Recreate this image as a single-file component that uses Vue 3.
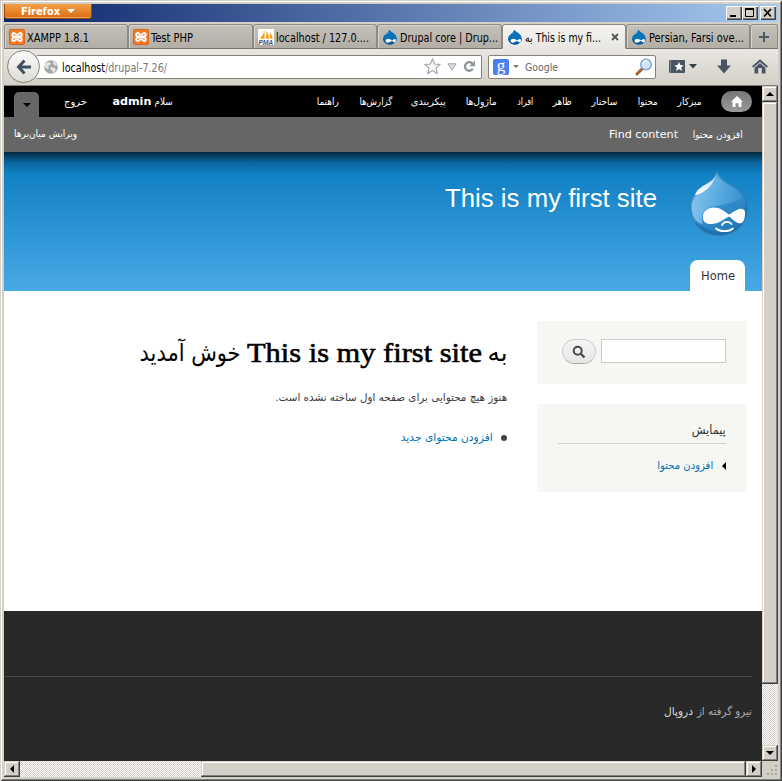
<script setup>
// Scales a run of text horizontally so that it occupies the given width.
const vFit = {
  mounted(el, { value }) {
    if (!value) return
    const natural = el.getBoundingClientRect().width
    const rtl = getComputedStyle(el).direction === 'rtl'
    el.style.transformOrigin = rtl ? 'right center' : 'left center'
    el.style.transform = `scaleX(${value / natural})`
    el.style.marginInlineEnd = `${value - natural}px`
  },
}

const tabs = [
  { icon: 'xampp', text: 'XAMPP 1.8.1', w: 62 },
  { icon: 'xampp', text: 'Test PHP', w: 42 },
  { icon: 'pma', text: 'localhost / 127.0....', w: 93 },
  { icon: 'drop', text: 'Drupal core | Drup...', w: 98 },
  { icon: 'drop', text: 'به \u200eThis is my fi...', w: 76, active: true },
  { icon: 'drop', text: 'Persian, Farsi ove...', w: 95 },
]

const menu = [
  { text: 'میزکار', w: 24, gap: 20 },
  { text: 'محتوا', w: 20, gap: 20 },
  { text: 'ساختار', w: 26, gap: 20 },
  { text: 'ظاهر', w: 19, gap: 20 },
  { text: 'افراد', w: 16, gap: 20 },
  { text: 'ماژول‌ها', w: 31, gap: 20 },
  { text: 'پیکربندی', w: 35, gap: 19 },
  { text: 'گزارش‌ها', w: 33, gap: 20 },
  { text: 'راهنما', w: 22, gap: 0 },
]
</script>

<template>
  <div class="window">
    <svg class="defs" width="0" height="0">
      <symbol id="drop" viewBox="0 0 16 16">
        <path d="M7.200.4C8 2.800 14.800 4.300 14.800 9.600c0 3.500-2.900 6-6.800 6s-6.900-2.500-6.900-6C1.100 5.200 6.500 4.400 7.200.4z" fill="#0872b9" />
        <path d="M3 5.500C4.400 4.400 6.300 3.600 7 2.200 7.100 4 5 5.200 3 5.500z" fill="#6db9e8" />
        <path d="M1.200 9.500c.3 4 3.400 6.100 6.800 6.100 3.900 0 6.600-2.600 6.800-5.800-2 2.300-10 4-13.600-.3z" fill="#075a99" />
        <path d="M10 11.600C8.600 10.600 7.600 9.800 6.200 9.800 4.600 9.800 3.600 10.800 3.600 12s1 1.700 2 1.700c1.700 0 2.800-1.300 4.400-1.800 1.300.5 2 1.700 3 1.500.9-.3 1.200-2.400.7-3-1-.9-2.500.6-3.700 1.200z" fill="#fff" />
      </symbol>
      <symbol id="xampp" viewBox="0 0 16 16">
        <rect x=".5" y=".5" width="15" height="15" rx="1.500" fill="#f37b28" stroke="#d9651b" />
        <path d="M5.800 4H5a1.600 1.600 0 0 0-.3 3.300L6 8l-1.300.7A1.600 1.600 0 0 0 5 12h.8M10.200 4h.8a1.600 1.600 0 0 1 .3 3.300L10 8l1.300.7A1.600 1.600 0 0 1 11 12h-.8M6 8h4M6 4.300l1 1.500h2l1-1.500M6 11.700l1-1.500h2l1 1.500" fill="none" stroke="#fff" stroke-width="1.900" />
      </symbol>
    </svg>

    <header class="titlebar">
      <button class="firefox"><span v-fit="39">Firefox</span><i class="tri light"></i></button>
      <div class="controls">
        <button><svg width="14" height="12"><path d="M3 9h6" stroke="#000" stroke-width="2" /></svg></button>
        <button><svg width="14" height="12"><path d="M2.500 2.500h8v7h-8zM2 2.500h9" fill="none" stroke="#000" /><path d="M2 2h9" stroke="#000" stroke-width="2" /></svg></button>
        <button class="close"><svg width="14" height="12"><path d="M3 2l7 7.500M10 2L3 9.500" stroke="#000" stroke-width="1.700" /></svg></button>
      </div>
    </header>

    <nav class="tabs">
      <div v-for="t in tabs" :key="t.text" class="tab" :class="{ active: t.active }">
        <svg v-if="t.icon === 'pma'" class="fav" width="16" height="16">
          <rect width="16" height="16" fill="#fff" />
          <path d="M6.500.5v9.300H1.500C4.500 7.500 6 4 6.500.5zM8 2c2 2 3 5 3 7.800H7.500C8.500 7.500 8.500 5 8 2zM11.500 3.500c2 1.500 3 4 3.200 6.300h-3c.5-2.300.4-4.300-.2-6.300z" fill="#f9a11b" />
          <text x=".2" y="15.500" textLength="15" lengthAdjust="spacingAndGlyphs" font-size="6.500" font-weight="bold" font-style="italic" font-family="Liberation Sans, sans-serif" fill="#4c4f82">PMA</text>
        </svg>
        <svg v-else class="fav" width="16" height="16"><use :href="'#' + t.icon" /></svg>
        <span v-fit="t.w" class="label" dir="ltr">{{ t.text }}</span>
        <svg v-if="t.active" class="x" width="8" height="8"><path d="M1 1l6 6M7 1L1 7" stroke="#555" stroke-width="1.800" /></svg>
      </div>
      <div class="tab plus"><svg width="12" height="12"><path d="M6 1v10M1 6h10" stroke="#4d5866" stroke-width="2" /></svg></div>
    </nav>

    <div class="navbar">
      <div class="back"><svg width="16" height="16"><path d="M8.500 1.500L2.500 8l6 6.500M3 8h12" fill="none" stroke="#43505f" stroke-width="3" /></svg></div>
      <div class="url">
        <svg width="14" height="14" viewBox="0 0 14 14"><circle cx="7" cy="7" r="6.800" fill="#a5a5a5" /><path d="M1 4l3-2 3 1-1 2-2 1 1 2-2 1-2-2zM9 1l3 2 1 3-3-1-1-2zM7 7l4 1 1 2-3 3-1-3-2-1z" fill="#e4e4e4" /></svg>
        <span v-fit="105" class="address">localhost<em>/drupal-7.26/</em></span>
        <svg class="star" width="17" height="17" viewBox="0 0 17 17"><path d="M8.500 1l2.200 5 5.300.5-4 3.600 1.200 5.400-4.700-2.900-4.700 2.900L5 10.100 1 6.500 6.300 6z" fill="#f4f4f4" stroke="#a0a4a8" stroke-width="1.100" /></svg>
        <svg class="drop" width="10" height="8"><path d="M.8.800h8.400L5 7z" fill="#d9dee4" stroke="#9ba4ae" /></svg>
        <svg class="reload" width="13" height="13" viewBox="0 0 13 13"><path d="M9.800 8.900A4.300 4.300 0 1 1 9.200 3.300" fill="none" stroke="#8d949c" stroke-width="2.300" /><path d="M12 .5v5.800H6.300z" fill="#8d949c" /></svg>
      </div>
      <div class="search">
        <span class="g">g</span><i class="tri small"></i><span v-fit="33" class="ph">Google</span>
        <svg width="18" height="18" viewBox="0 0 18 18"><path d="M8 10L2 16" stroke="#ad5f33" stroke-width="3" stroke-linecap="round" /><circle cx="11" cy="6.500" r="5.300" fill="#cde6fb" stroke="#7b9fc7" stroke-width="1.300" /><path d="M8 6a3.500 3.500 0 0 1 4-3" stroke="#fff" stroke-width="1.500" fill="none" /></svg>
      </div>
      <svg class="bm" width="28" height="16"><rect y="1" width="16" height="13" rx="1" fill="#485562" /><path d="M1.500 1v13" stroke="#7b858f" /><path d="M10 3l1.400 3.100 3.300.3-2.500 2.200.8 3.300-3-1.800-2.900 1.800.8-3.300-2.500-2.200 3.200-.3z" fill="#fff" /><path d="M20 5h8l-4 4.500z" fill="#34404c" /></svg>
      <svg class="dl" width="14" height="15"><path d="M4 .5h6v6h4l-7 8-7-8h4z" fill="#485562" /></svg>
      <svg class="home" width="16" height="15"><path d="M.7 8L8 1.500 15.300 8" fill="none" stroke="#485562" stroke-width="2" /><path d="M2.500 9L8 4l5.500 5v5.500H9.800V9H6.200v5.500H2.500z" fill="#485562" /></svg>
    </div>

    <div class="viewport">
      <main class="page" dir="rtl">
        <div class="admin">
          <span class="adminhome"><svg width="12" height="11"><path d="M6 0l6 5.800h-1.500V11H7.500V7.300h-3V11h-3V5.800H0z" fill="#fff" /></svg></span>
          <a v-for="m in menu" :key="m.text" class="item" :style="{ width: m.w + 'px', marginLeft: m.gap + 'px' }"><span v-fit="m.w">{{ m.text }}</span></a>
          <span class="hello"><span v-fit="18">سلام</span><b v-fit="39">admin</b></span>
          <span class="logout"><span v-fit="23">خروج</span></span>
          <span class="toggle"><i class="tri dark"></i></span>
        </div>
        <div class="shortcuts">
          <span v-fit="50">افزودن محتوا</span>
          <span v-fit="69" class="find" dir="ltr">Find content</span>
          <span class="edit"><span v-fit="63">ویرایش میان‌برها</span></span>
        </div>
        <div class="banner">
          <div class="brand">
            <svg width="58" height="66" viewBox="0 0 58 66">
              <defs>
                <linearGradient id="body" x1="0" y1="0" x2=".6" y2="1"><stop offset="0" stop-color="#69b7e9" /><stop offset=".45" stop-color="#3d97d4" /><stop offset="1" stop-color="#2078b8" /></linearGradient>
                <linearGradient id="shine" x1=".8" y1="0" x2=".2" y2="1"><stop offset="0" stop-color="#fff" stop-opacity=".6" /><stop offset="1" stop-color="#fff" /></linearGradient>
                <linearGradient id="glow" x1="0" y1=".5" x2="1" y2=".3"><stop offset="0" stop-color="#a9dcf8" stop-opacity=".6" /><stop offset="1" stop-color="#8accf2" stop-opacity=".1" /></linearGradient>
                <clipPath id="shape"><path d="M27 0C28 6 34 10 41 14 52 20 57.500 27 57.500 37 57.500 53 45 64.500 29 64.500S.5 53 .5 36C.5 26 6 20 14 14 21 10 25 7 27 0z" /></clipPath>
              </defs>
              <g clip-path="url(#shape)">
                <path d="M0 0h58v66H0z" fill="url(#body)" />
                <path d="M49 18c9 10 9 24 2 34C43 63 28 64 14 56c-5-2-10-5-14-9v19h58V18z" fill="#1767a5" opacity=".6" />
                <path d="M1.500 36C2 46 6 52 13 53c-3-7 0-15 8-17 14-3 28-5 31-10C48 17 32 14 27 5 20 17 3 20 1.500 36z" fill="url(#glow)" />
              </g>
              <path d="M27 0C28 6 34 10 41 14 52 20 57.500 27 57.500 37 57.500 53 45 64.500 29 64.500S.5 53 .5 36C.5 26 6 20 14 14 21 10 25 7 27 0z" fill="none" stroke="#3a7fb0" stroke-width=".8" />
              <path d="M26 3C25 13 14 23 5 24 7 18 13 15 18 12 23 9 25 7 26 3z" fill="url(#shine)" />
              <path d="M39 43.500C34 40 30 36.500 24 36.500 17 36.500 12.800 41 12.800 46c0 4.500 3 7 8 7 8 0 12-4.500 18.200-7.500 4 3 8 7.500 12 6.800 3-1 4.200-6 4-11-.2-3-3-4.200-6.500-3-4 1.300-6.500 3.700-9.500 5.200z" fill="#fff" />
              <path d="M32 54c2-4 7-4 9.500-1M26 57.500c4 3.500 13 3.500 17 0" fill="none" stroke="#fff" stroke-width="1.700" stroke-linecap="round" />
            </svg>
            <h2><span v-fit="212" dir="ltr">This is my first site</span></h2>
          </div>
          <a class="hometab"><span v-fit="34">Home</span></a>
        </div>
        <div class="body">
          <aside>
            <section class="block finder">
              <input type="text" />
              <button><svg width="14" height="14"><circle cx="5.700" cy="5.700" r="4" fill="none" stroke="#4a4a4a" stroke-width="2" /><path d="M8.500 8.500l4 4" stroke="#4a4a4a" stroke-width="2.400" /></svg></button>
            </section>
            <section class="block menu">
              <h3><span v-fit="34">پیمایش</span></h3>
              <p><svg width="4" height="8"><path d="M4 0v8L0 4z" /></svg><a v-fit="56">افزودن محتوا</a></p>
            </section>
          </aside>
          <article>
            <h1><span v-fit="20">به</span><b v-fit="235" dir="ltr">This is my first site</b><span v-fit="101">خوش آمدید</span></h1>
            <p class="lead"><span v-fit="232">هنوز هیچ محتوایی برای صفحه اول ساخته نشده است.</span></p>
            <p class="add"><i></i><a v-fit="92">افزودن محتوای جدید</a></p>
          </article>
        </div>
        <footer><div><span v-fit="55">نیرو گرفته از</span><b v-fit="29">دروپال</b></div></footer>
      </main>
      <div class="vbar"><button><i class="arr up"></i></button><div class="thumb"></div><button><i class="arr down"></i></button></div>
      <div class="hbar"><button><i class="arr left"></i></button><div class="thumb"></div><button><i class="arr right"></i></button></div>
      <div class="grip"><svg width="16" height="16"><g fill="#aaa69d"><path d="M13 4h2v2h-2zM13 8h2v2h-2zM9 8h2v2H9zM13 12h2v2h-2zM9 12h2v2H9zM5 12h2v2H5z" /></g></svg></div>
    </div>
  </div>
</template>

<style>
body { overflow: hidden; }
</style>

<style scoped>
* { box-sizing: border-box; }
.window { width: 782px; height: 781px; padding: 4px 4px 4px; background: #d4d0c8; font: 11px/14px "DejaVu Sans", sans-serif; color: #000; box-shadow: inset 1px 1px #d4d0c8, inset -1px -1px #404040, inset 2px 2px #fff, inset -2px -2px #808080; overflow: hidden; }
.defs { position: absolute; }
span, b, a { white-space: nowrap; }
[dir="ltr"] { direction: ltr; }
button { margin: 0; padding: 0; border: 0; font: inherit; }
h1, h2, h3, p { margin: 0; font-weight: normal; }
.tri { width: 0; height: 0; border: 4px solid transparent; border-bottom: 0; border-top: 4px solid #444; }

.titlebar { height: 18px; display: flex; justify-content: space-between; background: linear-gradient(90deg, #0a246a, #a6caf0); }
.firefox { width: 88px; height: 15px; display: flex; align-items: center; padding-left: 16px; gap: 7px; border: 1px solid #9b4d07; border-top: 0; border-radius: 0 0 3px 3px; background: linear-gradient(#f2a145, #db6c13); color: #fff; font: bold 11px/14px "DejaVu Sans", sans-serif; box-shadow: inset 0 -1px #eea65c; }
.firefox span { position: relative; top: 1px; }
.tri.light { border-top-color: #fff; }
.controls { display: flex; padding: 2px 2px 0 0; }
.controls button { width: 16px; height: 14px; padding: 1px; background: #d4d0c8; box-shadow: inset 1px 1px #fff, inset -1px -1px #404040, inset -2px -2px #808080; display: flex; }
.controls .close { margin-left: 2px; }

.tabs { height: 27px; padding-top: 2px; display: grid; grid-template-columns: 124px 125px 124px 125px 124px 124px 28px; }
.tab { display: flex; align-items: center; gap: 2px; padding: 1px 0 0 4px; height: 25px; border: 1px solid #8e8a83; border-bottom-color: #77736d; border-radius: 3px 3px 0 0; background: linear-gradient(#c4c1ba, #b2aea6); box-shadow: inset 1px 1px #d7d4cd; font: 12px/16px "DejaVu Sans Condensed", "DejaVu Sans", sans-serif; }
.label { padding-top: 1px; }
.tab.active { background: linear-gradient(#f5f4f1, #e9e7e2); border-bottom-color: #e9e7e2; box-shadow: none; }
.tab.plus { padding: 0; justify-content: center; }
.fav { flex: none; }
.x { margin: 0 6px 0 auto; }

.navbar { height: 37px; display: flex; align-items: center; padding: 0 10px 1px 3px; background: linear-gradient(#e9e7e2, #d4d0c8); border-bottom: 1px solid #7f7c76; font: 11px/16px "DejaVu Sans Condensed", "DejaVu Sans", sans-serif; }
.back { width: 33px; height: 33px; flex: none; border: 1px solid #85827c; border-radius: 50%; background: linear-gradient(#fbfbfa, #dedbd5); display: grid; place-items: center; z-index: 1; }
.url, .search { height: 24px; display: flex; align-items: center; background: #fff; border: 1px solid #85827c; border-radius: 2px; }
.url { width: 446px; margin-left: -4px; padding: 0 5px 0 8px; border-left: 0; }
.address { margin-left: 4px; font-size: 11.500px; padding-top: 2px; }
.address em { font-style: normal; color: #777; }
.star { margin-left: auto; margin-right: 6px; }
.drop { margin-right: 6px; }
.search { width: 168px; margin-left: 6px; padding: 0 2px 0 4px; }
.g { width: 16px; height: 16px; background: #4c7fee; border-radius: 2px; color: #fff; font: 17px/13px "Liberation Serif", serif; text-align: center; }
.tri.small { border-width: 3px; border-bottom: 0; border-top-color: #777; margin: 0 6px 0 4px; }
.ph { color: #666; padding-top: 2px; }
.search svg { margin-left: auto; }
.bm { margin-left: 13px; }
.dl { margin-left: 20px; }
.home { margin-left: auto; }

.viewport { display: grid; grid-template-columns: 758px 16px; grid-template-rows: 675px 16px; }
.page { height: 675px; overflow: hidden; background: #fff; }
.admin { height: 31px; background: #000; color: #fff; display: flex; padding: 5px 10px 0; line-height: 22px; font-size: 10px; }
.adminhome { width: 31px; height: 21px; margin-left: 19px; border-radius: 11px; background: linear-gradient(#777, #999); display: grid; place-items: center; }
.item, .item span, .hello span, .logout span, .firefox span { display: inline-block; }
.hello { display: flex; gap: 4px; margin-right: 144px; }
.hello b { font-size: 11px; }
.logout { margin-right: 25px; }
.toggle { width: 25px; height: 25px; margin: 1px auto 0 0; background: #666; border-radius: 5px 5px 0 0; display: grid; place-items: center; }
.tri.dark { border-top-color: #000; }
.shortcuts { height: 35px; background: #666; color: #fff; display: flex; gap: 15px; padding: 6px 19px 0 10px; line-height: 24px; font-size: 10px; }
.shortcuts .find { font-size: 11px; }
.shortcuts .edit { margin-right: auto; line-height: 22px; }
.edit span { display: inline-block; }
.banner { height: 139px; background: linear-gradient(#000a, #0003 10px, transparent 22px), linear-gradient(#0779bf, #48a9e4); display: flex; flex-direction: column; justify-content: space-between; padding: 19px 14px 0 0; }
.brand { display: flex; gap: 33px; }
h2 { margin-top: 11px; font: 26px/32px "Liberation Sans", sans-serif; color: #fff; direction: ltr; }
h2 span, h3 span, h1 span, h1 b, .hometab span { display: inline-block; }
.hometab { margin-right: 3px; width: 55px; height: 31px; border-radius: 8px 8px 0 0; background: #fff; color: #333; font: 13px/31px "DejaVu Sans Condensed", sans-serif; direction: ltr; padding-left: 11px; }
.body { height: 320px; display: flex; padding: 30px 15px 0 0; gap: 29px; }
aside { width: 210px; }
.block { background: #f6f6f2; padding: 18px 21px; }
.finder { height: 63px; display: flex; gap: 5px; }
input { width: 125px; height: 24px; padding: 0; border: 1px solid #ccc; background: #fff; }
.finder button { width: 34px; height: 25px; border: 1px solid #ccc; border-bottom-color: #aaa; border-radius: 13px; background: linear-gradient(#f5f5f5, #e6e6e6); display: grid; place-items: center; }
.menu { height: 88px; margin-top: 20px; padding-top: 16px; }
h3 { height: 24px; border-bottom: 1px solid #d2d2cf; font: 12.500px/19px "DejaVu Sans", sans-serif; color: #333; }
.menu p { display: flex; align-items: center; gap: 9px; height: 20px; margin-top: 12px; font-size: 11px; }
.menu a, .add a { color: #0071b3; }
h1 { display: flex; gap: 6px; margin-top: 12px; font: 26px/40px "DejaVu Sans", sans-serif; }
h1 b { font: 28px/40px "Liberation Serif", serif; -webkit-text-stroke: .6px #000; }
h1 span { font-size: 24px; }
.lead { height: 20px; margin-top: 14px; padding-right: 1px; display: flex; font-size: 11px; line-height: 22px; color: #3b3b3b; }
.add { display: flex; align-items: center; gap: 8px; height: 20px; margin-top: 21px; padding-right: 1px; }
.add i { width: 6px; height: 6px; border-radius: 50%; background: #444; }
footer { height: 150px; background: #292929; padding: 65px 10px 0 0; color: #aaa; }
footer div { border-top: 1px solid #484848; height: 60px; padding-top: 28px; display: flex; gap: 4px; }
footer b { color: #ddd; font-weight: normal; }

.vbar, .hbar { display: flex; background: conic-gradient(#fff 25%, #d4d0c8 0 50%, #fff 0 75%, #d4d0c8 0) 0 0 / 2px 2px; }
.vbar { flex-direction: column; justify-content: space-between; }
.vbar button, .hbar button, .thumb { background: #d4d0c8; box-shadow: inset -1px -1px #404040, inset 1px 1px #d4d0c8, inset -2px -2px #808080, inset 2px 2px #fff; }
.vbar button, .hbar button { flex: none; width: 16px; height: 16px; display: grid; place-items: center; }
.vbar .thumb { height: 582px; margin-bottom: auto; }
.hbar .thumb { width: 545px; margin-left: auto; }
.arr { width: 0; height: 0; border: 4px solid transparent; }
.up { border-top: 0; border-bottom-color: #000; }
.down { border-bottom: 0; border-top-color: #000; }
.left { border-left: 0; border-right-color: #000; }
.right { border-right: 0; border-left-color: #000; }
.grip { background: #d4d0c8; height: 16px; }
</style>
